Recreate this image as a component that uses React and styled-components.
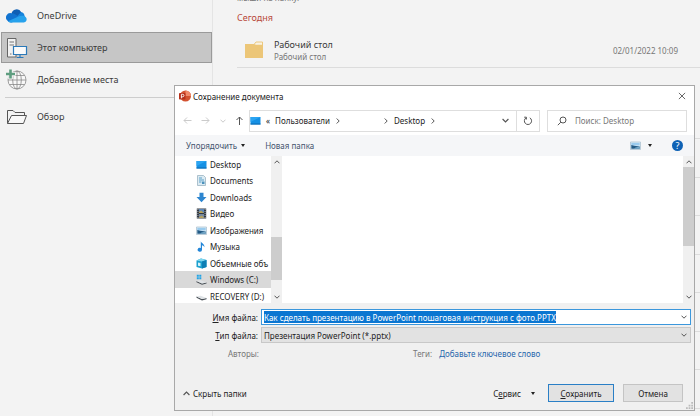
import styled, { createGlobalStyle } from 'styled-components'

const GlobalStyle = createGlobalStyle`
  * {
    box-sizing: border-box;
  }

  body {
    margin: 0;
    background: #f3f3f3;
    color: #3a3a3a;
    font-family: 'Noto Sans', 'Open Sans', sans-serif;
    font-size: 8px;
    overflow: hidden;
  }

  button,
  input,
  select {
    font: inherit;
    color: inherit;
    margin: 0;
  }
`

const folders = [
  { name: 'Desktop', Icon: DesktopIcon },
  { name: 'Documents', Icon: DocumentsIcon },
  { name: 'Downloads', Icon: DownloadsIcon },
  { name: 'Видео', Icon: VideoIcon },
  { name: 'Изображения', Icon: PicturesIcon },
  { name: 'Музыка', Icon: MusicIcon },
  { name: 'Объемные объ', Icon: CubeIcon },
  { name: 'Windows (C:)', Icon: SystemDriveIcon, selected: true },
  { name: 'RECOVERY (D:)', Icon: DriveIcon },
]

export default function App() {
  return (
    <>
      <GlobalStyle />
      <Page>
        <Sidebar>
          <Place>
            <OneDriveIcon />
            OneDrive
          </Place>
          <Place $active>
            <ComputerIcon />
            Этот компьютер
          </Place>
          <Place>
            <AddPlaceIcon />
            Добавление места
          </Place>
          <Divider />
          <Place>
            <OpenFolderIcon />
            Обзор
          </Place>
        </Sidebar>
        <Recent>
          <Hint>мыши на папку.</Hint>
          <GroupTitle>Сегодня</GroupTitle>
          <RecentRow>
            <FolderIcon />
            <RecentText>
              <RecentName>Рабочий стол</RecentName>
              <RecentPath>Рабочий стол</RecentPath>
            </RecentText>
            <RecentDate>02/01/2022 10:09</RecentDate>
          </RecentRow>
          <GroupGap />
          {[1, 2, 3, 4, 5, 6, 7, 8].map((n) => (
            <EmptyRow key={n} />
          ))}
        </Recent>
      </Page>
      <SaveDialog />
    </>
  )
}

function SaveDialog() {
  return (
    <Dialog role="dialog" aria-label="Сохранение документа">
      <TitleBar>
        <PowerPointIcon />
        <DialogTitle>Сохранение документа</DialogTitle>
        <IconButton aria-label="Закрыть">
          <Glyph $size={8} viewBox="0 0 9 9">
            <path d="M1 1l7 7M8 1l-7 7" />
          </Glyph>
        </IconButton>
      </TitleBar>

      <AddressRow>
        <NavButtons>
          <NavButton aria-label="Назад" $muted>
            <Glyph $size={9} viewBox="0 0 9 9">
              <path d="M8.500 4.500H1M4 1.500l-3 3 3 3" />
            </Glyph>
          </NavButton>
          <NavButton aria-label="Вперед" $muted>
            <Glyph $size={9} viewBox="0 0 9 9">
              <path d="M.5 4.500H8M5 1.500l3 3-3 3" />
            </Glyph>
          </NavButton>
          <NavButton aria-label="Последние расположения" $muted>
            <Chevron />
          </NavButton>
          <NavButton aria-label="Вверх">
            <Glyph $size={9} viewBox="0 0 9 9">
              <path d="M4.500 9V1M1.500 4l3-3 3 3" />
            </Glyph>
          </NavButton>
        </NavButtons>
        <AddressBar>
          <DesktopIcon />
          <Crumb>«</Crumb>
          <Crumb>Пользователи</Crumb>
          <Chevron $turn={-90} />
          <HiddenUser />
          <Chevron $turn={-90} />
          <Crumb>Desktop</Crumb>
          <Chevron $turn={-90} />
          <AddressEnd>
            <Chevron $size={7} />
            <RefreshButton aria-label="Обновить">
              <Glyph $size={10} viewBox="0 0 10 10">
                <path d="M6.800 1.800A3.600 3.600 0 1 1 3 1.900M1.200 1.200H3.400V3.500" />
              </Glyph>
            </RefreshButton>
          </AddressEnd>
        </AddressBar>
        <SearchBox>
          <Glyph $size={10} viewBox="0 0 10 10">
            <circle cx="6" cy="4" r="3" />
            <path d="M3.800 6.200L.8 9.200" />
          </Glyph>
          <SearchInput placeholder="Поиск: Desktop" aria-label="Поиск" />
        </SearchBox>
      </AddressRow>

      <Toolbar>
        <ToolButton>
          Упорядочить
          <Caret />
        </ToolButton>
        <ToolButton>Новая папка</ToolButton>
        <ToolbarEnd>
          <ToolButton aria-label="Вид" $gap={7}>
            <PicturesIcon />
            <Caret />
          </ToolButton>
          <HelpButton aria-label="Справка">?</HelpButton>
        </ToolbarEnd>
      </Toolbar>

      <Browser>
        <Tree>
          {folders.map(({ name, Icon, selected }) => (
            <TreeItem key={name} $selected={selected}>
              <Icon />
              <TreeLabel>{name}</TreeLabel>
            </TreeItem>
          ))}
        </Tree>
        <Scrollbar before={70} thumb={43} after={12} />
        <FileArea />
        <Scrollbar before={0} thumb={79} after={46} />
      </Browser>

      <Details>
        <FieldLabel htmlFor="file-name">
          <u>И</u>мя файла:
        </FieldLabel>
        <Field $focused>
          <Selection>
            <FileNameInput
              id="file-name"
              defaultValue="Как сделать презентацию в PowerPoint пошаговая инструкция с фото.PPTX"
            />
          </Selection>
          <Chevron />
        </Field>
        <FieldLabel htmlFor="file-type">
          <u>Т</u>ип файла:
        </FieldLabel>
        <Field>
          <TypeSelect id="file-type">
            <option>Презентация PowerPoint (*.pptx)</option>
          </TypeSelect>
          <Chevron />
        </Field>
      </Details>

      <Meta>
        <span>Авторы:</span>
        <Tags>
          <span>Теги:</span>
          <TagLink href="#tags">Добавьте ключевое слово</TagLink>
        </Tags>
      </Meta>

      <Footer>
        <HideFolders>
          <Chevron $turn={180} $size={7} />
          Скрыть папки
        </HideFolders>
        <ServiceButton>
          <span>
            С<u>е</u>рвис
          </span>
          <Caret />
        </ServiceButton>
        <ActionButton $primary>
          <u>С</u>охранить
        </ActionButton>
        <ActionButton>Отмена</ActionButton>
      </Footer>
      <Grip viewBox="0 0 8 8">
        <path d="M6 0h2v2H6zM3 3h2v2H3zM6 3h2v2H6zM0 6h2v2H0zM3 6h2v2H3zM6 6h2v2H6z" />
      </Grip>
    </Dialog>
  )
}

function Scrollbar({ before, thumb, after }) {
  return (
    <ScrollColumn>
      <Chevron $turn={180} />
      <ScrollTrack>
        <Spacer $grow={before} />
        <Thumb $grow={thumb} />
        <Spacer $grow={after} />
      </ScrollTrack>
      <Chevron />
    </ScrollColumn>
  )
}

function Chevron({ $turn = 0, $size = 6 }) {
  return (
    <Glyph $size={$size} $turn={$turn} viewBox="0 0 6 6">
      <path d="M.5 1.700L3 4.200l2.500-2.500" />
    </Glyph>
  )
}

function OneDriveIcon() {
  return (
    <svg width="22" height="22" viewBox="0 0 22 22">
      <path d="M5.500 9a5.200 5.200 0 0 1 9.800-1.800L12 13 4 15z" fill="#0f5fb4" />
      <path d="M1.300 15.500A4.300 4.300 0 0 1 5.500 8.300c3 0 5 2 8 4.200L6 17.500H5a4.200 4.200 0 0 1-3.700-2z" fill="#1173d0" />
      <path d="M11 11.500l4-4.500a4.600 4.600 0 0 1 3.600 4L20 15l-7-1z" fill="#1683dc" />
      <path d="M2 16.300L12 11.700c2.500-1.200 6.500-1.400 8.200 1 1.300 2.300-.3 4.800-3 4.800H5a4 4 0 0 1-3-1.200z" fill="#27a2ec" />
    </svg>
  )
}

function ComputerIcon() {
  return (
    <svg width="22" height="22" viewBox="0 0 22 22" fill="none">
      <path d="M1.500 1.500h8.500v18.500H1.500z" fill="#f1f1f1" stroke="#666" />
      <path d="M3.500 5h4.500M3.500 8h4.500" stroke="#777" />
      <path d="M4 17h1.500" stroke="#777" />
      <path d="M7.500 9.500h13v8h-13z" fill="#fafafa" stroke="#2b79b9" strokeWidth="1.200" />
      <path d="M14 17.500v3M10.500 20.500h7" stroke="#2b79b9" strokeWidth="1.200" />
    </svg>
  )
}

function AddPlaceIcon() {
  return (
    <svg width="22" height="22" viewBox="0 0 22 22" fill="none">
      <g stroke="#888" strokeWidth=".8">
        <circle cx="11" cy="11" r="9" fill="#f8f8f8" />
        <ellipse cx="11" cy="11" rx="4.300" ry="9" />
        <path d="M11 2v18M2 11h18M3.500 6.500h15M3.500 15.500h15" />
      </g>
      <path d="M4.500 0v10M0 5h9.500" stroke="#f3f3f3" strokeWidth="4.500" />
      <path d="M4.500 .5v9M0 5h9" stroke="#5f9d80" strokeWidth="2.600" />
    </svg>
  )
}

function OpenFolderIcon() {
  return (
    <svg width="22" height="22" viewBox="0 0 22 22" fill="none" stroke="#555">
      <path d="M1.500 17.500V4.500h5.500l2 2h9.500v3" />
      <path d="M1.500 17.500l4-8h15l-3 8z" fill="#f8f8f8" />
    </svg>
  )
}

function FolderIcon() {
  return (
    <svg width="20" height="18" viewBox="0 0 20 18">
      <path d="M10 3.500l2-2.500h6.500v3" fill="#faf3e2" stroke="#ecc87e" />
      <path d="M1 3h9l2 .8h7V17H1z" fill="#ecc678" />
    </svg>
  )
}

function PowerPointIcon() {
  return (
    <svg width="12" height="12" viewBox="0 0 12 12">
      <circle cx="6.500" cy="6" r="5.500" fill="#d35230" />
      <path d="M6.500.5A5.500 5.500 0 0 1 12 6H6.500z" fill="#f08a6a" />
      <rect x="0" y="3" width="6.500" height="6.500" rx=".8" fill="#b7301a" />
      <path d="M2.400 8.300V4.300h1.300a1.200 1.200 0 0 1 0 2.500H2.400" fill="none" stroke="#fff" strokeWidth=".9" />
    </svg>
  )
}

function DesktopIcon() {
  return (
    <svg width="11" height="11" viewBox="0 0 11 11">
      <path d="M.5 2h10v7.500H.5z" fill="#1590e4" />
      <path d="M.5 2h10L.5 7z" fill="#2ba4f2" />
      <path d="M.5 8.500h10v1H.5z" fill="#0c69b0" />
    </svg>
  )
}

function DocumentsIcon() {
  return (
    <svg width="11" height="11" viewBox="0 0 11 11">
      <path d="M1.500.5h6l2 2v8h-8z" fill="#dcebf3" stroke="#9ab4c2" strokeWidth=".8" />
      <path d="M3 3h3M3 5h5M3 7h2.500" stroke="#5aa0c8" />
      <path d="M6 6.500h2.500v2.500H6z" fill="#4c92bd" />
    </svg>
  )
}

function DownloadsIcon() {
  return (
    <svg width="11" height="11" viewBox="0 0 11 11">
      <path d="M3.500.8h4V5h3L5.500 10.300.5 5h3z" fill="#2d86d0" />
    </svg>
  )
}

function VideoIcon() {
  return (
    <svg width="11" height="11" viewBox="0 0 11 11">
      <path d="M.8.5h9.400v10H.8z" fill="#333a42" />
      <path d="M3 1h5v4H3z" fill="#5c86b8" />
      <path d="M3 6h5v4H3z" fill="#7389a3" />
      <path d="M3 4l2-1.500L8 5H3zM3 9l3-1.500 2 2.500H3z" fill="#b8a25c" />
      <path d="M1.900 1v9.500M9.100 1v9.500" stroke="#c8ccd0" strokeWidth=".8" strokeDasharray="1 1" />
    </svg>
  )
}

function PicturesIcon() {
  return (
    <svg width="11" height="11" viewBox="0 0 11 11">
      <path d="M.5 2h10v7.500H.5z" fill="#e6f1f8" stroke="#a5bccb" strokeWidth=".7" />
      <path d="M1.300 2.800h8.400v2.700H1.300z" fill="#9acbee" />
      <path d="M1.300 5l3 .8 5.400.7v2.200H1.300z" fill="#235b86" />
      <path d="M5.500 7.500l4.200-1v2.200H4z" fill="#74a9c9" />
    </svg>
  )
}

function MusicIcon() {
  return (
    <svg width="11" height="11" viewBox="0 0 11 11">
      <path d="M4.800.3c.5 2 4 2.500 3.600 6-.4-1.500-1.600-2-2.400-2.100v4.600a2.200 1.900 0 1 1-1.200-1.700z" fill="#2386d8" />
    </svg>
  )
}

function CubeIcon() {
  return (
    <svg width="11" height="11" viewBox="0 0 11 11">
      <path d="M.5 2.500L5 .5l5.500 1.500v7L6 10.500.5 9z" fill="#1ba0cf" />
      <path d="M.5 2.500L5 .5l5.500 1.500L6 3.500z" fill="#7fd6ee" />
      <path d="M6 3.500l4.500-1.500v7L6 10.500z" fill="#0d7fb4" />
      <path d="M2 4.500l2.500.6v3.200L2 7.700z" fill="#d6f3fa" />
    </svg>
  )
}

function SystemDriveIcon() {
  return (
    <svg width="11" height="11" viewBox="0 0 11 11">
      <path d="M.8.8h2v2h-2zM3.300.8h2v2h-2zM.8 3.300h2v2h-2zM3.300 3.300h2v2h-2z" fill="#1fa3e6" />
      <path d="M.5 7l5.500 2.500 4.500-1v1L6 10.800.5 8.200z" fill="#4b5157" />
      <path d="M.5 7l4-.8 6 2.300L6 9.500z" fill="#dfe3e6" />
    </svg>
  )
}

function DriveIcon() {
  return (
    <svg width="11" height="11" viewBox="0 0 11 11">
      <path d="M.5 5.500L6 8l4.500-1v1.200L6 9.500.5 6.800z" fill="#4b5157" />
      <path d="M.5 5.500l4-.8 6 2.300L6 8z" fill="#dfe3e6" />
    </svg>
  )
}

const Page = styled.div`
  display: flex;
  height: 100vh;
  overflow: hidden;
`

const Sidebar = styled.nav`
  display: flex;
  flex-direction: column;
  gap: 1px;
  width: 213px;
  flex: none;
  padding-left: 1px;
  border-right: 1px solid #e4e4e4;
`

const Place = styled.button`
  display: flex;
  align-items: center;
  gap: 9px;
  height: 31px;
  padding: 0 4px;
  border: 1px solid ${(p) => (p.$active ? '#9a9a9a' : 'transparent')};
  background: ${(p) => (p.$active ? '#c6c6c6' : 'none')};
  font-size: 9px;
  text-align: left;
`

const Divider = styled.hr`
  width: auto;
  height: 1px;
  margin: 1px 8px 2px 4px;
  border: 0;
  background: #cdcdcd;
`

const Recent = styled.main`
  flex: 1;
  padding-left: 24px;
`

const Hint = styled.p`
  height: 12px;
  margin: -8px 0 0;
  line-height: 12px;
  color: #777;
`

const GroupTitle = styled.h2`
  margin: 6px 0 7px;
  font-size: 9px;
  line-height: 16px;
  font-weight: 400;
  color: #b8483a;
`

const RecentRow = styled.div`
  display: flex;
  align-items: center;
  gap: 10px;
  height: 35px;
  padding: 0 22px 0 7px;
  border-bottom: 1px solid #dcdcdc;
`

const RecentText = styled.div`
  flex: 1;
`

const RecentName = styled.div`
  font-size: 9px;
  line-height: 13px;
`

const RecentPath = styled.div`
  line-height: 12px;
  color: #777;
`

const RecentDate = styled.time`
  color: #777;
`

const GroupGap = styled.div`
  height: 33px;
`

const EmptyRow = styled.div`
  height: 39px;
  border-bottom: 1px solid #dcdcdc;

  &:nth-child(odd) {
    height: 38px;
  }
`

const Dialog = styled.section`
  position: absolute;
  top: 85px;
  left: 174px;
  right: 5px;
  border: 1px solid #a8a8a8;
  background: #f0f0f0;
  color: #222;
`

const TitleBar = styled.header`
  display: flex;
  align-items: center;
  gap: 2px;
  height: 20px;
  padding: 0 8px 0 4px;
  background: #fff;
`

const DialogTitle = styled.h1`
  flex: 1;
  margin: 0;
  font-size: 8px;
  font-weight: 400;
`

const IconButton = styled.button`
  display: flex;
  padding: 0;
  border: 0;
  background: none;
`

const Glyph = styled.svg`
  width: ${(p) => p.$size}px;
  height: ${(p) => p.$size}px;
  flex: none;
  fill: none;
  stroke: #555;
  transform: rotate(${(p) => p.$turn || 0}deg);
`

const AddressRow = styled.div`
  display: flex;
  align-items: center;
  height: 29px;
  padding-right: 7px;
  background: #fff;
`

const NavButtons = styled.div`
  display: flex;
  align-items: center;
  justify-content: space-between;
  width: 74px;
  padding: 0 5px 0 8px;
`

const NavButton = styled(IconButton)`
  opacity: ${(p) => (p.$muted ? 0.3 : 1)};
`

const AddressBar = styled.div`
  display: flex;
  align-items: center;
  flex: 1;
  gap: 5px;
  height: 22px;
  border: 1px solid #dedede;
`

const Crumb = styled.span`
  white-space: nowrap;
`

const HiddenUser = styled.span`
  width: 32px;
`

const AddressEnd = styled.div`
  display: flex;
  align-items: center;
  gap: 7px;
  height: 100%;
  margin-left: auto;
`

const RefreshButton = styled(IconButton)`
  align-items: center;
  justify-content: center;
  width: 23px;
  height: 100%;
  border-left: 1px solid #dedede;
`

const SearchBox = styled.div`
  display: flex;
  align-items: center;
  gap: 8px;
  width: 140px;
  height: 22px;
  margin-left: 7px;
  padding: 0 9px;
  border: 1px solid #dedede;
`

const SearchInput = styled.input`
  flex: 1;
  min-width: 0;
  padding: 0;
  border: 0;
  outline: 0;
  background: none;

  &::placeholder {
    color: #777;
    opacity: 1;
  }
`

const Toolbar = styled.div`
  display: flex;
  align-items: center;
  gap: 20px;
  height: 21px;
  padding: 0 11px;
  background: #f5f6f8;
  color: #44546e;
`

const ToolButton = styled(IconButton)`
  align-items: center;
  gap: ${(p) => p.$gap || 4}px;
`

const ToolbarEnd = styled.div`
  display: flex;
  align-items: center;
  gap: 20px;
  margin-left: auto;
`

const Caret = styled.i`
  border: 2px solid transparent;
  border-top: 3px solid #222;
  border-bottom: 0;
`

const HelpButton = styled.button`
  width: 11px;
  height: 11px;
  padding: 0;
  border: 0;
  border-radius: 50%;
  background: #0f62b5;
  color: #fff;
  font-size: 9px;
  line-height: 11px;
`

const Browser = styled.div`
  display: flex;
  height: 147px;
  background: #fff;
`

const Tree = styled.ul`
  width: 96px;
  margin: 0;
  padding: 0;
  list-style: none;
`

const TreeItem = styled.li`
  display: flex;
  align-items: center;
  gap: 3px;
  height: 16px;
  padding-left: 21px;
  background: ${(p) => (p.$selected ? '#d9d9d9' : 'none')};

  &:nth-child(even) {
    height: 17px;
  }

  svg {
    flex: none;
  }
`

const TreeLabel = styled.span`
  white-space: nowrap;
`

const ScrollColumn = styled.div`
  display: flex;
  flex-direction: column;
  align-items: center;
  gap: 2px;
  width: 11px;
  padding: 3px 0;
  background: #f0f0f0;
`

const ScrollTrack = styled.div`
  display: flex;
  flex-direction: column;
  flex: 1;
  width: 100%;
`

const Spacer = styled.div`
  flex: ${(p) => p.$grow};
`

const Thumb = styled.div`
  flex: ${(p) => p.$grow};
  background: #cdcdcd;
`

const FileArea = styled.div`
  flex: 1;
`

const Details = styled.div`
  display: grid;
  grid-template-columns: 83px 1fr;
  column-gap: 3px;
  row-gap: 2px;
  align-items: center;
  padding: 6px 3px 0 0;
`

const FieldLabel = styled.label`
  text-align: right;
`

const Field = styled.div`
  display: flex;
  align-items: center;
  justify-content: space-between;
  height: 16px;
  padding: 0 3px 0 2px;
  border: 1px solid ${(p) => (p.$focused ? '#3b97dc' : '#c8c8c8')};
  background: ${(p) => (p.$focused ? '#fff' : '#e2e2e2')};
`

const Selection = styled.div`
  display: flex;
  background: #0b76d1;
  color: #fff;
`

const FileNameInput = styled.input`
  field-sizing: content;
  height: 12px;
  padding: 0;
  border: 0;
  outline: 0;
  background: none;
`

const TypeSelect = styled.select`
  appearance: none;
  flex: 1;
  padding: 0;
  border: 0;
  outline: 0;
  background: none;
`

const Meta = styled.div`
  display: flex;
  gap: 154px;
  padding: 5px 0 0 53px;
  line-height: 12px;
  color: #777;
`

const Tags = styled.div`
  display: flex;
  gap: 7px;
`

const TagLink = styled.a`
  color: #1f66ac;
  text-decoration: none;
`

const Footer = styled.footer`
  display: flex;
  align-items: center;
  padding: 24px 11px 8px 8px;
`

const HideFolders = styled(IconButton)`
  align-items: center;
  gap: 3px;
  margin-right: auto;
`

const ServiceButton = styled(IconButton)`
  align-items: center;
  gap: 10px;
  margin-right: 13px;
`

const ActionButton = styled.button`
  width: ${(p) => (p.$primary ? 66 : 60)}px;
  height: 18px;
  padding: 0;
  border: 1px solid ${(p) => (p.$primary ? '#2a7fc6' : '#c4c4c4')};
  background: #e2e2e2;

  & + & {
    margin-left: 9px;
  }
`

const Grip = styled.svg`
  position: absolute;
  right: 1px;
  bottom: 1px;
  width: 7px;
  height: 7px;
  fill: #bbb;
`
